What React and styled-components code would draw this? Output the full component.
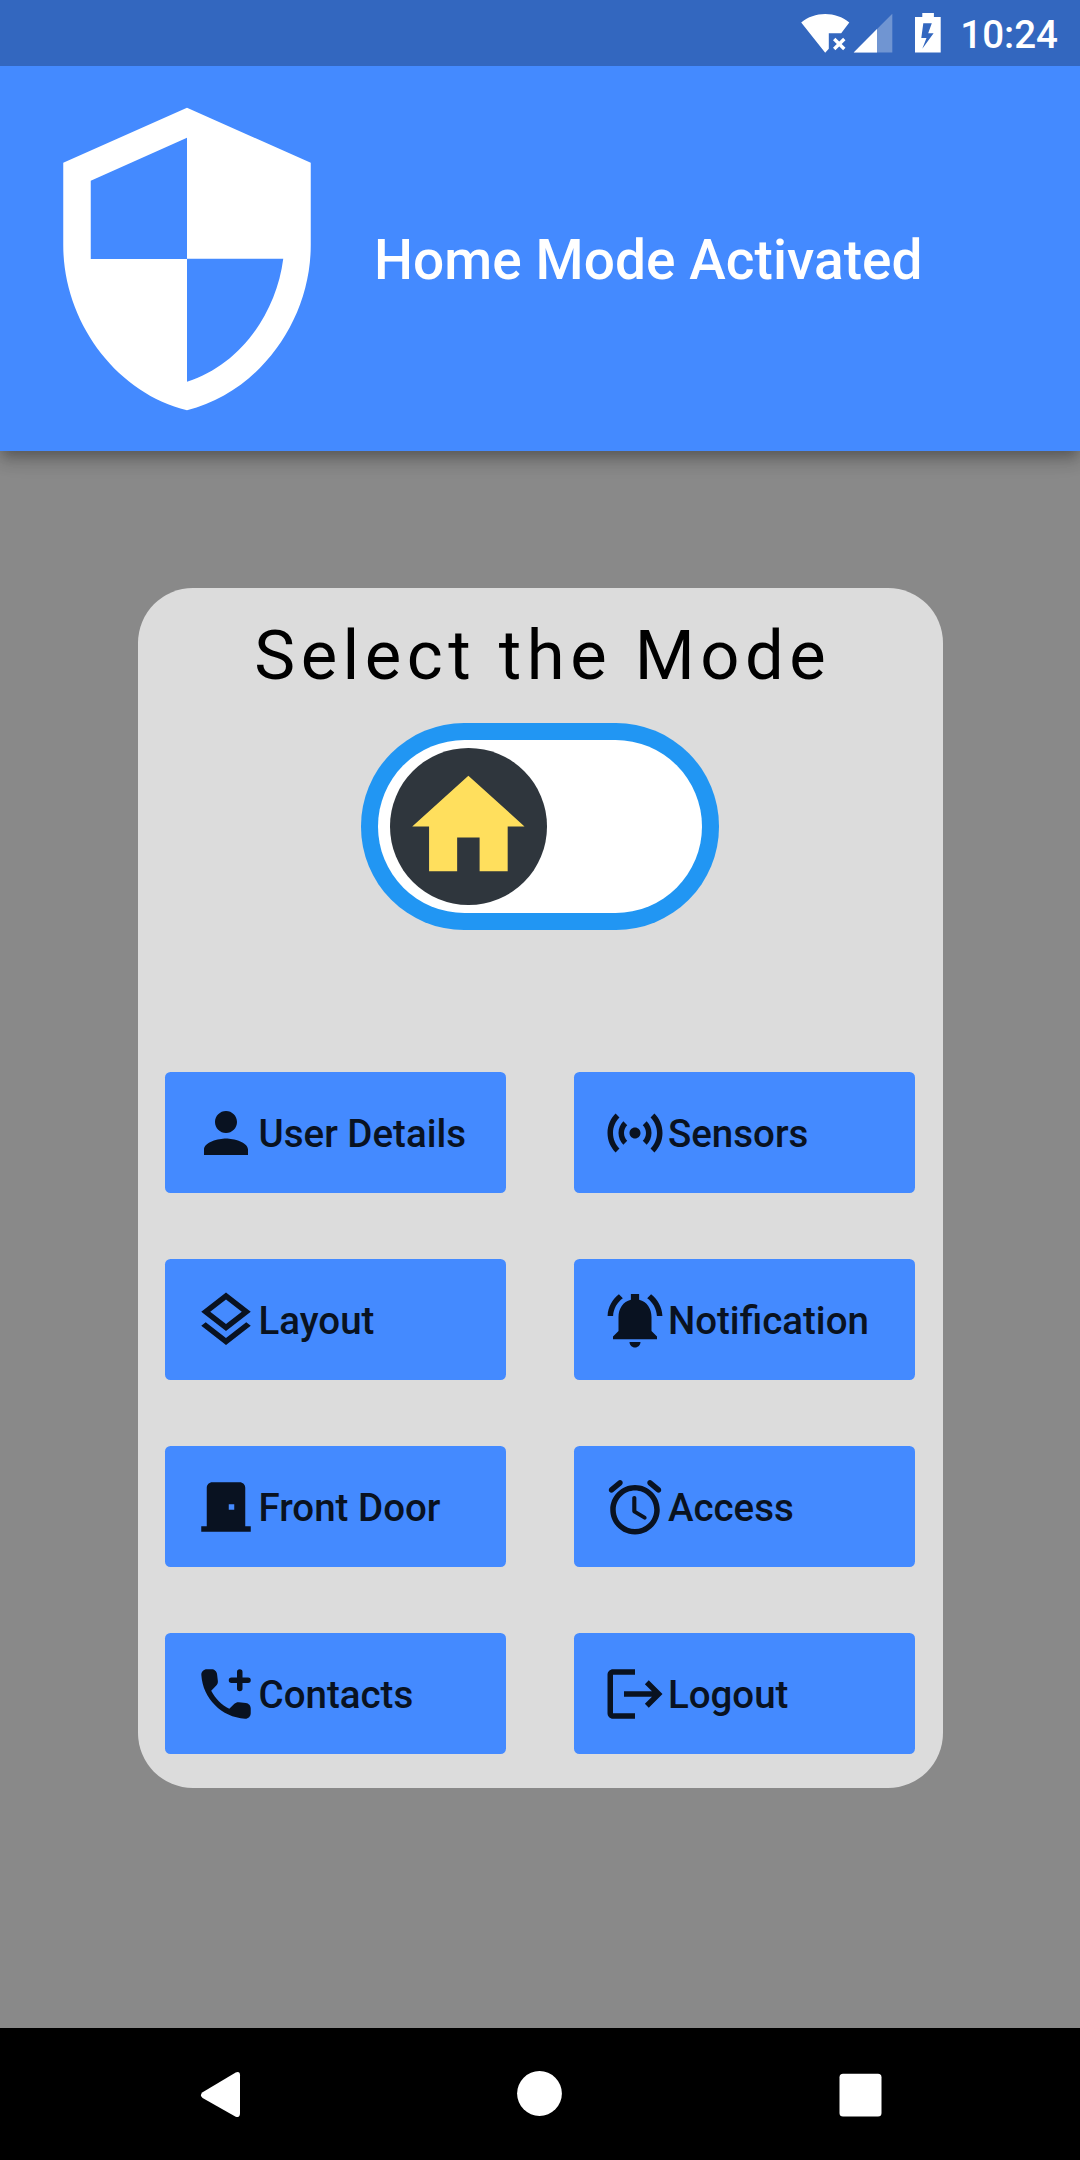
import React from "react";
import styled, { createGlobalStyle } from "styled-components";

const GlobalStyle = createGlobalStyle`
  * { box-sizing: border-box; }
  html, body { margin: 0; padding: 0; }
  body { background: #898989; font-family: Roboto, "Noto Sans", sans-serif; }
`;

const Screen = styled.div`
  width: 1080px;
  height: 2160px;
  display: flex;
  flex-direction: column;
  overflow: hidden;
  background: #898989;
`;

const StatusBar = styled.div`
  position: relative;
  z-index: 1;
  flex: none;
  height: 66px;
  display: flex;
  align-items: center;
  justify-content: flex-end;
  padding-right: 22px;
  background: #3367bf;
`;

const StatusIcon = styled.svg`
  display: block;
  width: ${(p) => p.$w}px;
  height: 66px;
`;

const Clock = styled.span`
  margin-left: 18px;
  padding-top: 3px;
  color: #fff;
  font-size: 38.5px;
  font-weight: 500;
  line-height: 63px;
`;

const Header = styled.header`
  flex: none;
  height: 385px;
  display: flex;
  align-items: center;
  gap: 22px;
  padding-left: 22px;
  background: #448aff;
  box-shadow: 0 5.5px 11px -2.75px rgba(0, 0, 0, 0.2),
    0 11px 13.75px rgba(0, 0, 0, 0.14), 0 2.75px 27.5px rgba(0, 0, 0, 0.12);
`;

const HeaderTitle = styled.h1`
  margin: 0;
  padding-top: 2px;
  color: #fff;
  font-size: 55px;
  font-weight: 500;
  line-height: 64px;
  letter-spacing: 0.06px;
  white-space: nowrap;
`;

const Icon = styled.svg.attrs({ viewBox: "0 0 24 24" })`
  display: block;
  flex: none;
  width: ${(p) => p.$size}px;
  height: ${(p) => p.$size}px;
  fill: ${(p) => p.$color};
`;

const Body = styled.main`
  flex: 1;
  display: flex;
  flex-direction: column;
  align-items: center;
  padding-top: 137.4px;
`;

const Card = styled.section`
  width: 805px;
  height: 1199.2px;
  display: flex;
  flex-direction: column;
  align-items: center;
  padding: 27px 27.5px 33.2px;
  border-radius: 55px;
  background: #dcdcdc;
`;

const CardTitle = styled.h2`
  margin: 0;
  padding-left: 5.5px;
  color: #000;
  font-size: 68.75px;
  font-weight: 400;
  line-height: 81px;
  letter-spacing: 5.5px;
  white-space: nowrap;
`;

const Toggle = styled.div`
  display: flex;
  width: 357.5px;
  height: 206.25px;
  margin-top: 27px;
  padding: 16.5px;
  border-radius: 103.125px;
  background: #2196f3;
`;

const Track = styled.div`
  flex: 1;
  display: flex;
  align-items: center;
  padding-left: 12.5px;
  border-radius: 86.625px;
  background: #fff;
`;

const Thumb = styled.div`
  display: flex;
  align-items: center;
  justify-content: center;
  width: 156.75px;
  height: 156.75px;
  border-radius: 50%;
  background: #2f363d;
`;

const Actions = styled.div`
  align-self: stretch;
  margin-top: auto;
  display: grid;
  grid-template-columns: 1fr 1fr;
  grid-auto-rows: 121px;
  gap: 66px 68.75px;
`;

const ActionButton = styled.button`
  display: flex;
  align-items: center;
  margin: 0;
  padding: 0 0 0 27.5px;
  border: 0;
  border-radius: 5.5px;
  background: #448aff;
  color: #091221;
  font-family: inherit;
  font-size: 38.5px;
  font-weight: 500;
  line-height: 45px;
  white-space: nowrap;
`;

const ActionLabel = styled.span`
  padding-top: 2px;
`;

const NavBar = styled.nav`
  flex: none;
  height: 132px;
  display: grid;
  grid-template-columns: repeat(3, 320px);
  justify-content: center;
  align-items: center;
  justify-items: center;
  background: #000;
`;

const NavIcon = styled.svg`
  display: block;
  width: 66px;
  height: 66px;
  fill: #fff;
`;

const SHIELD =
  "M12 1L3 5v6c0 5.55 3.84 10.74 9 12 5.16-1.26 9-6.45 9-12V5l-9-4zm0 10.99h7c-.53 4.12-3.28 7.79-7 8.94V12H5V6.3l7-3.11v8.8z";
const HOME = "M10 20v-6h4v6h5v-8h3L12 3 2 12h3v8z";

const ACTIONS = [
  {
    label: "User Details",
    path: "M12 12c2.21 0 4-1.79 4-4s-1.79-4-4-4-4 1.79-4 4 1.79 4 4 4zm0 2c-2.67 0-8 1.34-8 4v2h16v-2c0-2.66-5.33-4-8-4z",
  },
  {
    label: "Sensors",
    path: "M7.76 16.24C6.67 15.16 6 13.66 6 12s.67-3.16 1.76-4.24l1.42 1.42C8.45 9.9 8 10.9 8 12c0 1.1.45 2.1 1.17 2.83l-1.41 1.41zm8.48 0C17.33 15.16 18 13.66 18 12s-.67-3.16-1.76-4.24l-1.42 1.42C15.55 9.9 16 10.9 16 12c0 1.1-.45 2.1-1.17 2.83l1.41 1.41zM12 10c-1.1 0-2 .9-2 2s.9 2 2 2 2-.9 2-2-.9-2-2-2zm8 2c0 2.21-.9 4.21-2.35 5.65l1.42 1.42C20.88 17.26 22 14.76 22 12s-1.12-5.26-2.93-7.07l-1.42 1.42C19.1 7.79 20 9.79 20 12zM6.35 6.35L4.93 4.93C3.12 6.74 2 9.24 2 12s1.12 5.26 2.93 7.07l1.42-1.42C4.9 16.21 4 14.21 4 12s.9-4.21 2.35-5.65z",
  },
  {
    label: "Layout",
    path: "M11.99 18.54l-7.37-5.73L3 14.07l9 7 9-7-1.63-1.27-7.38 5.74zM12 16l7.36-5.73L21 9l-9-7-9 7 1.63 1.27L12 16zm0-11.47L17.74 9 12 13.47 6.26 9 12 4.53z",
  },
  {
    label: "Notification",
    path: "M18 16v-5c0-3.07-1.63-5.64-4.5-6.32V2.5h-3v2.18C7.64 5.36 6 7.92 6 11v5l-2 2v1h16v-1l-2-2zM12 22c1.1 0 2-.9 2-2h-4c0 1.1.89 2 2 2zM7.58 4.08L6.15 2.65C3.75 4.48 2.17 7.3 2.03 10.5h2c.15-2.65 1.51-4.97 3.55-6.42zM19.97 10.5h2c-.15-3.2-1.73-6.02-4.12-7.85l-1.42 1.43c2.02 1.45 3.39 3.77 3.54 6.42z",
  },
  {
    label: "Front Door",
    path: "M19 19V5c0-1.1-.9-2-2-2H7c-1.1 0-2 .9-2 2v14H3v2h18v-2h-2zm-4-6h-2v-2h2v2z",
  },
  {
    label: "Access",
    path: "M15.87 15.25l-3.37-2V8.72c0-.4-.32-.72-.72-.72h-.06c-.4 0-.72.32-.72.72v4.72c0 .35.18.68.49.86l3.65 2.19c.34.2.78.1.98-.24.21-.35.1-.8-.25-1zm5.31-10.24L18.1 2.45c-.42-.35-1.05-.3-1.41.13-.35.42-.29 1.05.13 1.41l3.07 2.56c.42.35 1.05.3 1.41-.13.36-.42.3-1.05-.12-1.41zM4.1 6.55l3.07-2.56c.43-.36.49-.99.13-1.41-.35-.43-.98-.48-1.4-.13L2.82 5.01c-.42.36-.48.99-.12 1.41.35.43.98.48 1.4.13zM12 4c-4.97 0-9 4.03-9 9s4.03 9 9 9 9-4.03 9-9-4.03-9-9-9zm0 16c-3.86 0-7-3.14-7-7s3.14-7 7-7 7 3.14 7 7-3.14 7-7 7z",
  },
  {
    label: "Contacts",
    path: "M19.23 15.26l-2.54-.29c-.61-.07-1.21.14-1.64.57l-1.84 1.84c-2.83-1.44-5.15-3.75-6.59-6.59l1.85-1.85c.43-.43.64-1.03.57-1.64l-.29-2.52c-.12-1.01-.97-1.77-1.99-1.77H5.03c-1.13 0-2.07.94-2 2.07.53 8.54 7.36 15.36 15.89 15.89 1.13.07 2.07-.87 2.07-2v-1.73c.01-1.01-.75-1.86-1.76-1.98zM20 6h-2V4a1 1 0 0 0-2 0v2h-2a1 1 0 0 0 0 2h2v2a1 1 0 0 0 2 0V8h2a1 1 0 0 0 0-2z",
  },
  {
    label: "Logout",
    path: "M17 7l-1.41 1.41L18.17 11H8v2h10.17l-2.58 2.58L17 17l5-5-5-5zM4 5h8V3H4c-1.1 0-2 .9-2 2v14c0 1.1.9 2 2 2h8v-2H4V5z",
  },
];

function StatusIcons() {
  return (
    <StatusIcon $w={142} viewBox="0 0 142 66">
      {/* Wi-Fi without a connection */}
      <path
        d="M1.2 22.4C8 17 16.3 14 25.2 14S42.5 17 49.3 22.4L41.2 33.2H28.8V48.8L25.2 52.8z"
        fill="#fff"
      />
      <path d="M34.2 39L44.3 49M44.3 39L34.2 49" stroke="#fff" strokeWidth="3.4" />
      {/* Cell signal */}
      <path d="M92.3 13.7V52.6H53.7z" fill="#fff" opacity="0.3" />
      <path d="M77 29.1V52.6H53.7z" fill="#fff" />
      {/* Charging battery */}
      <path
        fillRule="evenodd"
        d="M122.3 13h11.6v4h6.8v35.6H115V17h7.3zM123.3 23.3L121.3 38h5.2L122.3 48.8 133.6 33.2H128.2L131.8 23.3z"
        fill="#fff"
      />
    </StatusIcon>
  );
}

export default function App() {
  return (
    <>
      <GlobalStyle />
      <Screen>
        <StatusBar>
          <StatusIcons />
          <Clock>10:24</Clock>
        </StatusBar>
        <Header>
          <Icon $size={330} $color="#fff">
            <path d={SHIELD} />
          </Icon>
          <HeaderTitle>Home Mode Activated</HeaderTitle>
        </Header>
        <Body>
          <Card>
            <CardTitle>Select the Mode</CardTitle>
            <Toggle role="switch" aria-checked="false">
              <Track>
                <Thumb>
                  <Icon $size={134.75} $color="#ffdf5d">
                    <path d={HOME} />
                  </Icon>
                </Thumb>
              </Track>
            </Toggle>
            <Actions>
              {ACTIONS.map((action) => (
                <ActionButton key={action.label}>
                  <Icon $size={66} $color="#091221">
                    <path d={action.path} />
                  </Icon>
                  <ActionLabel>{action.label}</ActionLabel>
                </ActionButton>
              ))}
            </Actions>
          </Card>
        </Body>
        <NavBar>
          <NavIcon viewBox="0 0 66 66">
            <path d="M15.6 31.2 48.7 11.4Q53 9.8 53 14.2V52Q53 57.400 48.700 55.700L15.600 37Q12.200 34.100 15.600 31.200z" />
          </NavIcon>
          <NavIcon viewBox="0 0 66 66">
            <circle cx="32.5" cy="32.5" r="22.4" />
          </NavIcon>
          <NavIcon viewBox="0 0 66 66">
            <rect x="12.5" y="12.8" width="42" height="42.6" rx="3.5" />
          </NavIcon>
        </NavBar>
      </Screen>
    </>
  );
}
